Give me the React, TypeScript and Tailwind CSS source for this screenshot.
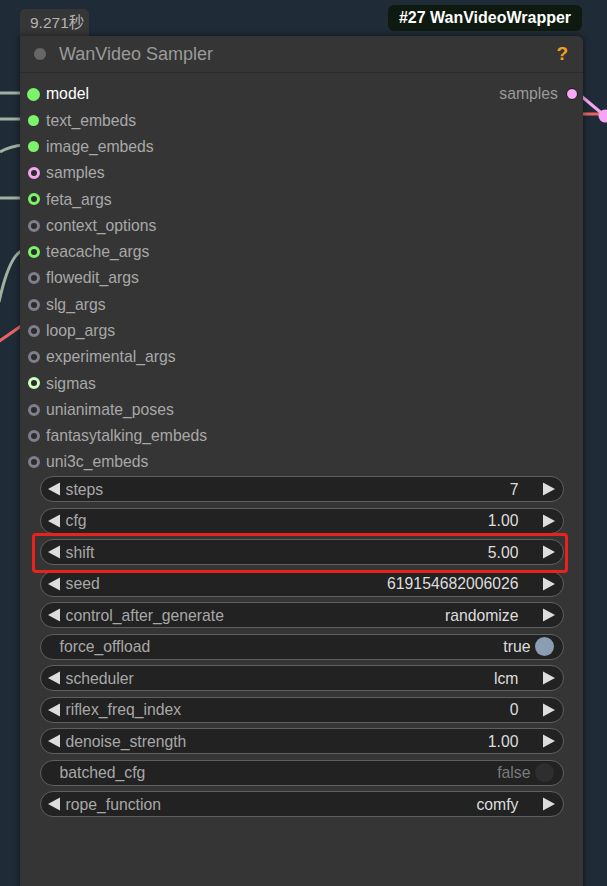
import React from 'react';

const FONT = "font-['Liberation_Sans','Noto_Sans_CJK_SC',Arial,sans-serif]";

type Dot = 'big' | 'fill' | 'ring';

type Input = { name: string; kind: Dot; color: string; bright?: boolean };

const inputs: Input[] = [
    { name: 'model', kind: 'big', color: 'bg-[#7cf36a]', bright: true },
    { name: 'text_embeds', kind: 'fill', color: 'bg-[#7cf36a]' },
    { name: 'image_embeds', kind: 'fill', color: 'bg-[#7cf36a]' },
    { name: 'samples', kind: 'ring', color: 'border-[#f5a6f0]' },
    { name: 'feta_args', kind: 'ring', color: 'border-[#7cf36a]' },
    { name: 'context_options', kind: 'ring', color: 'border-[#7e7e8c]' },
    { name: 'teacache_args', kind: 'ring', color: 'border-[#7cf36a]' },
    { name: 'flowedit_args', kind: 'ring', color: 'border-[#7e7e8c]' },
    { name: 'slg_args', kind: 'ring', color: 'border-[#7e7e8c]' },
    { name: 'loop_args', kind: 'ring', color: 'border-[#7e7e8c]' },
    { name: 'experimental_args', kind: 'ring', color: 'border-[#7e7e8c]' },
    { name: 'sigmas', kind: 'ring', color: 'border-[#cdfdc0]' },
    { name: 'unianimate_poses', kind: 'ring', color: 'border-[#7e7e8c]' },
    { name: 'fantasytalking_embeds', kind: 'ring', color: 'border-[#7e7e8c]' },
    { name: 'uni3c_embeds', kind: 'ring', color: 'border-[#7e7e8c]' },
];

type Widget =
    | { type: 'num'; label: string; value: string; highlight?: boolean }
    | { type: 'toggle'; label: string; on: boolean };

const widgets: Widget[] = [
    { type: 'num', label: 'steps', value: '7' },
    { type: 'num', label: 'cfg', value: '1.00' },
    { type: 'num', label: 'shift', value: '5.00', highlight: true },
    { type: 'num', label: 'seed', value: '619154682006026' },
    { type: 'num', label: 'control_after_generate', value: 'randomize' },
    { type: 'toggle', label: 'force_offload', on: true },
    { type: 'num', label: 'scheduler', value: 'lcm' },
    { type: 'num', label: 'riflex_freq_index', value: '0' },
    { type: 'num', label: 'denoise_strength', value: '1.00' },
    { type: 'toggle', label: 'batched_cfg', on: false },
    { type: 'num', label: 'rope_function', value: 'comfy' },
];

const Arrow = ({ dir }: { dir: 'l' | 'r' }) => (
    <svg className="w-[14px] h-[14px] shrink-0" viewBox="0 0 14 14">
        {dir === 'l' ? (
            <polygon points="13,0.5 13,13.5 1,7" fill="#dddddd" />
        ) : (
            <polygon points="1,0.5 1,13.5 13,7" fill="#dddddd" />
        )}
    </svg>
);

const SlotDot = ({ kind, color }: { kind: Dot; color: string }) => {
    if (kind === 'big') return <div className={`w-[13px] h-[13px] rounded-full ${color}`} />;
    if (kind === 'fill') return <div className={`w-[10.5px] h-[10.5px] rounded-full ${color}`} />;
    return <div className={`w-[12px] h-[12px] rounded-full border-[3.5px] bg-[#2c2c2c] ${color}`} />;
};

const WidgetRow = ({ w }: { w: Widget }) => {
    if (w.type === 'toggle') {
        return (
            <div className="h-[26px] rounded-full border border-[#5f5f5f] bg-[#222222] flex items-center pl-[19px] pr-[9px]">
                <span className="text-[#a8a8a8]">{w.label}</span>
                <span className={`ml-auto ${w.on ? 'text-[#dddddd]' : 'text-[#7a7a7a]'}`}>
                    {w.on ? 'true' : 'false'}
                </span>
                <div
                    className={`ml-[4px] w-[19px] h-[19px] rounded-full ${w.on ? 'bg-[#8a9db3]' : 'bg-[#2e2e2e]'}`}
                />
            </div>
        );
    }
    const row = (
        <div className="h-[26px] rounded-full border border-[#5f5f5f] bg-[#222222] flex items-center pl-[6px] pr-[7px]">
            <Arrow dir="l" />
            <span className="ml-[5px] text-[#a8a8a8]">{w.label}</span>
            <span className="ml-auto text-[#dddddd]">{w.value}</span>
            <div className="w-[23px]" />
            <Arrow dir="r" />
        </div>
    );
    if (!w.highlight) return row;
    return (
        <div className="relative">
            {row}
            {/* 빨간 강조 박스 */}
            <div className="absolute -left-[8px] -right-[4px] -top-[6px] -bottom-[8px] border-[3.5px] border-[#e8221c] rounded-[4px] pointer-events-none" />
        </div>
    );
};

export default function App() {
    return (
        <div className={`relative w-[607px] h-[886px] overflow-hidden bg-[#1f2b36] ${FONT}`}>
            {/* 배경 와이어 */}
            <svg className="absolute inset-0 w-full h-full" viewBox="0 0 607 886">
                <g stroke="#9fb2a0" strokeWidth="3" fill="none">
                    <path d="M0 93 H24" />
                    <path d="M0 119 H24" />
                    <path d="M0 152 Q10 146 24 145" />
                    <path d="M0 198 H24" />
                    <path d="M24 250 C14 252 6 270 -1 302" />
                </g>
                <path d="M-2 342 L24 324" stroke="#e86464" strokeWidth="3" fill="none" />
                <path d="M580 114 H607" stroke="#e86464" strokeWidth="3" fill="none" />
                <path d="M580 95 L605 116" stroke="#f5a6f0" strokeWidth="3" fill="none" />
                <circle cx="605" cy="116" r="6.5" fill="#f5a6f0" />
            </svg>

            <div className="relative pl-[20px] pt-[9px]">
                {/* 실행 시간 탭 */}
                <div className="w-[69px] h-[27px] rounded-t-[5px] bg-[#363636] flex items-center pl-[10px] text-[15.5px] text-[#b4b4b4]">
                    9.271秒
                </div>

                {/* 노드 */}
                <div className="w-[563px] h-[900px] bg-[#353535] rounded-tr-[6px] shadow-[0_0_6px_rgba(0,0,0,0.55)] text-[15.75px]">
                    <div className="h-[37px] flex items-center pl-[14px] pr-[15px] border-b border-[#2c2c2c]">
                        <div className="w-[12px] h-[12px] rounded-full bg-[#666666]" />
                        <span className="ml-[13px] text-[18px] text-[#9a9a9a]">WanVideo Sampler</span>
                        <span className="ml-auto text-[19px] font-bold text-[#f0a020]">?</span>
                    </div>

                    <div className="pt-[8px]">
                        {inputs.map((inp, i) => (
                            <div key={inp.name} className="h-[26.3px] flex items-center">
                                <div className="w-[26px] flex justify-center pl-[1px]">
                                    <SlotDot kind={inp.kind} color={inp.color} />
                                </div>
                                <span className={inp.bright ? 'text-white' : 'text-[#a8a8a8]'}>{inp.name}</span>
                                {i === 0 && (
                                    <div className="ml-auto flex items-center pr-[5px]">
                                        <span className="text-[#9a9a9a]">samples</span>
                                        <div className="ml-[8px] w-[12px] h-[12px] rounded-full bg-[#f7a8f5] border-[1.5px] border-[#111111]" />
                                    </div>
                                )}
                            </div>
                        ))}
                    </div>

                    <div className="mt-[1px] px-[19.5px] flex flex-col gap-[5.5px]">
                        {widgets.map(w => (
                            <WidgetRow key={w.label} w={w} />
                        ))}
                    </div>
                </div>
            </div>

            {/* 노드 배지 */}
            <div className="absolute left-[388px] top-[5px] w-[194px] h-[26px] rounded-[6px] bg-[#0e1a10] flex items-center justify-center text-[16px] font-bold text-white">
                #27 WanVideoWrapper
            </div>
        </div>
    );
}
